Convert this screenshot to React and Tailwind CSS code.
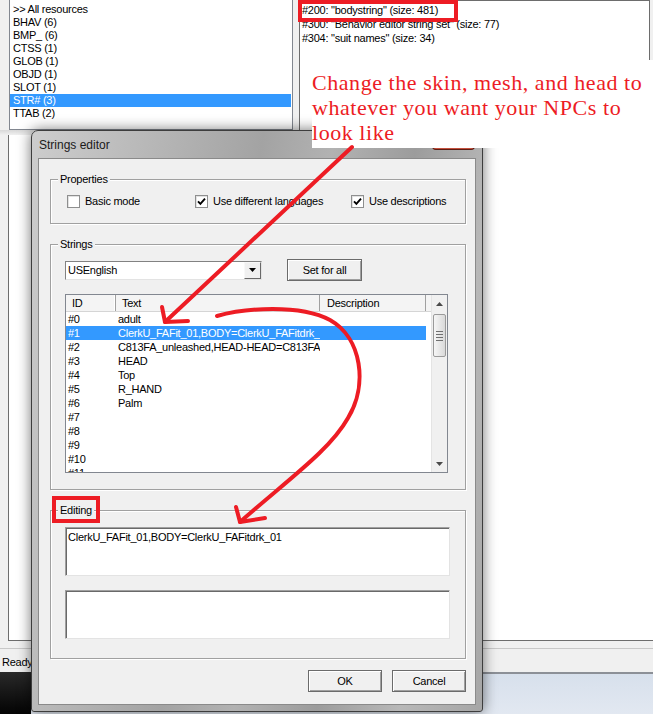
import React from 'react';

const resources = ['>> All resources', 'BHAV (6)', 'BMP_ (6)', 'CTSS (1)', 'GLOB (1)', 'OBJD (1)', 'SLOT (1)', 'STR# (3)', 'TTAB (2)'];
const strSets = ['#200: "bodystring" (size: 481)', '#300: "Behavior editor string set" (size: 77)', '#304: "suit names" (size: 34)'];
const rows = [
  ['#0', 'adult'],
  ['#1', 'ClerkU_FAFit_01,BODY=ClerkU_FAFitdrk_01'],
  ['#2', 'C813FA_unleashed,HEAD-HEAD=C813FA_unleashed'],
  ['#3', 'HEAD'],
  ['#4', 'Top'],
  ['#5', 'R_HAND'],
  ['#6', 'Palm'],
  ['#7', ''],
  ['#8', ''],
  ['#9', ''],
  ['#10', ''],
  ['#11', ''],
];

function Check({ checked, label }) {
  return (
    <div className="flex items-center gap-[5px]">
      <div className="w-[13px] h-[13px] border border-[#8e8f8f] bg-white shadow-[inset_1px_1px_0_#e2e2e2] flex items-center justify-center">
        {checked && (
          <svg width="9" height="9" viewBox="0 0 9 9">
            <path d="M1 4.3 L3.4 6.8 L8 1.6" stroke="#000" strokeWidth="1.9" fill="none" />
          </svg>
        )}
      </div>
      <span>{label}</span>
    </div>
  );
}

function Group({ label, className, children }) {
  return (
    <div className={`relative w-[416px] border border-[#a0a0a0] shadow-[inset_1px_1px_0_#fff,1px_1px_0_#fff] ${className}`}>
      <span className="absolute -top-[8px] left-[7px] px-[2px] bg-[#f0f0f0] leading-[14px]">{label}</span>
      {children}
    </div>
  );
}

function Button({ children, className = '' }) {
  return (
    <div className={`h-[22px] flex items-center justify-center bg-[#f0f0f0] border border-[#6b6b6b] shadow-[inset_1px_1px_0_#fff,inset_-1px_-1px_0_#a0a0a0] ${className}`}>
      {children}
    </div>
  );
}

export default function App() {
  return (
    <div className="relative w-[653px] h-[714px] overflow-hidden bg-[#f0f0f0] text-[11px] tracking-[-0.25px] text-black font-['Liberation_Sans',Arial,sans-serif]">
      {/* main app behind the dialog */}
      <div className="flex flex-col h-full">
        <div className="flex h-[130px]">
          <div className="w-[9px]" />
          <div className="w-[284px] bg-white border-l border-r border-b border-[#828790] pt-[3px] pr-[1px]">
            {resources.map((r, i) => (
              <div
                key={r}
                className={`h-[13px] leading-[13px] pl-[3px] whitespace-nowrap ${i === 7 ? 'bg-[#3399ff] text-white' : ''}`}
              >
                {r}
              </div>
            ))}
          </div>
          <div className="w-[6px]" />
          <div className="w-[351px] bg-white border-l border-r border-t border-[#6d6d6d] pt-[2px] pl-[2px]">
            {strSets.map(s => (
              <div key={s} className="h-[14px] leading-[14px] whitespace-nowrap">{s}</div>
            ))}
          </div>
        </div>
        <div className="h-[5px] bg-gradient-to-b from-[#d8d8d8] to-[#f0f0f0]" />
        <div className="h-[506px] ml-[8px] bg-white border-l border-b border-[#6d6d6d]" />
        <div className="h-[7px]" />
        <div className="h-[24px] border-t border-[#c8c8c8] pl-[2px] pt-[6px] leading-[14px]">Ready</div>
        <div className="flex flex-1">
          <div className="w-[31px] bg-gradient-to-b from-[#2a2a2a] to-[#050505]" />
          <div className="flex-1 border-t-2 border-[#8c9097] bg-gradient-to-b from-[#d7e0ec] to-[#e2e8f1]" />
        </div>
      </div>

      {/* Strings editor dialog */}
      <div className="absolute left-[31px] top-[130px] w-[452px] h-[582px] rounded-t-[7px] rounded-b-[3px] border border-[#3d3d3d] bg-[linear-gradient(100deg,#cdcdcd_0%,#b9b9b9_20%,#a3a3a3_42%,#b2b2b2_55%,#9c9c9c_70%,#b8b8b8_85%,#a6a6a6_100%)] shadow-[0_0_14px_rgba(0,0,0,0.55)] flex flex-col px-[6px] pb-[6px]">
        <div className="absolute top-0 right-[7px] w-[43px] h-[19px] rounded-b-[4px] bg-[#c4503e] border border-t-0 border-[#5e1c12]" />
        <div className="h-[27px] flex items-center pl-[1px] pt-[1px] text-[12px] tracking-normal text-[#1a1a1a]">Strings editor</div>
        <div className="flex-1 bg-[#f0f0f0] border border-[#8a8a8a] pl-[11px] pt-[20px]">
          <Group label="Properties" className="h-[45px] pt-[13px] pl-[16px]">
            <div className="flex items-center">
              <div className="w-[128px]"><Check label="Basic mode" /></div>
              <div className="w-[156px]"><Check checked label="Use different languages" /></div>
              <Check checked label="Use descriptions" />
            </div>
          </Group>

          <Group label="Strings" className="h-[246px] mt-[20px] pl-[14px]">
            <div className="flex items-center gap-[25px] h-[22px] mt-[14px]">
              <div className="w-[197px] h-[19px] flex bg-white border border-t-[#828282] border-l-[#828282] border-r-[#e3e3e3] border-b-[#e3e3e3]">
                <div className="flex-1 pl-[2px] leading-[17px]">USEnglish</div>
                <div className="w-[17px] h-[17px] bg-[#f0f0f0] border border-t-[#f8f8f8] border-l-[#f8f8f8] border-r-[#696969] border-b-[#696969] flex items-center justify-center">
                  <svg width="7" height="4" viewBox="0 0 7 4"><path d="M0 0 L7 0 L3.5 4Z" fill="#000" /></svg>
                </div>
              </div>
              <Button className="w-[75px]">Set for all</Button>
            </div>
            <div className="mt-[13px] w-[383px] h-[179px] flex bg-white border border-[#828790] overflow-hidden">
              <div className="w-[365px] flex flex-col">
                <div className="h-[17px] flex bg-[#f4f4f4] border-b border-[#d5d5d5] leading-[16px]">
                  <div className="w-[50px] pl-[6px] border-r border-[#a0a0a0] shadow-[inset_-1px_0_0_#fff]">ID</div>
                  <div className="w-[204px] pl-[6px] border-r border-[#a0a0a0]">Text</div>
                  <div className="w-[106px] pl-[7px] border-r border-[#a0a0a0]">Description</div>
                </div>
                {rows.map(([id, text], i) => (
                  <div
                    key={id}
                    className={`w-[360px] h-[14px] shrink-0 flex leading-[14px] ${i === 1 ? 'bg-[#3399ff] text-white' : ''}`}
                  >
                    <div className="w-[50px] pl-[2px]">{id}</div>
                    <div className="w-[204px] pl-[2px] overflow-hidden whitespace-nowrap">{text}</div>
                  </div>
                ))}
              </div>
              <div className="w-[16px] flex flex-col bg-[#f0f0f0] border-l border-[#e4e4e4]">
                <div className="h-[17px] flex items-center justify-center">
                  <svg width="7" height="4" viewBox="0 0 7 4"><path d="M0 4 L3.5 0 L7 4Z" fill="#4a4a4a" /></svg>
                </div>
                <div className="mx-[1px] mt-[2px] h-[43px] rounded-[2px] border border-[#9a9a9a] bg-gradient-to-r from-[#f6f6f6] to-[#d9d9d9] flex flex-col items-center justify-center gap-[2px]">
                  <div className="w-[7px] h-px bg-[#707070]" />
                  <div className="w-[7px] h-px bg-[#707070]" />
                  <div className="w-[7px] h-px bg-[#707070]" />
                  <div className="w-[7px] h-px bg-[#707070]" />
                </div>
                <div className="flex-1" />
                <div className="h-[17px] flex items-center justify-center">
                  <svg width="7" height="4" viewBox="0 0 7 4"><path d="M0 0 L7 0 L3.5 4Z" fill="#4a4a4a" /></svg>
                </div>
              </div>
            </div>
          </Group>

          <Group label="Editing" className="h-[149px] mt-[20px] pl-[14px] pt-[16px]">
            <div className="w-[385px] h-[49px] bg-white border border-t-[#a0a0a0] border-l-[#a0a0a0] border-r-[#e3e3e3] border-b-[#e3e3e3] shadow-[inset_1px_1px_0_#696969] pl-[2px] pt-[2px] leading-[14px]">
              ClerkU_FAFit_01,BODY=ClerkU_FAFitdrk_01
            </div>
            <div className="mt-[14px] w-[385px] h-[49px] bg-white border border-t-[#a0a0a0] border-l-[#a0a0a0] border-r-[#e3e3e3] border-b-[#e3e3e3] shadow-[inset_1px_1px_0_#696969]" />
          </Group>

          <div className="w-[416px] mt-[11px] flex justify-end gap-[10px]">
            <Button className="w-[74px]">OK</Button>
            <Button className="w-[74px]">Cancel</Button>
          </div>
        </div>
      </div>

      {/* annotation */}
      <div className="absolute left-[312px] top-[60px] w-[341px] h-[88px] bg-white pt-[10px] text-[22px] leading-[25px] tracking-[0.55px] text-[#ed1c24] font-['Liberation_Serif',serif]">
        Change the skin, mesh, and head to
        <br />
        whatever you want your NPCs to
        <br />
        look like
      </div>

      <div className="absolute left-[298px] top-0 w-[160px] h-[22px] border-4 border-[#ed1c24]" />
      <div className="absolute left-[52px] top-[496px] w-[48px] h-[27px] border-4 border-[#ed1c24]" />

      <svg className="absolute left-0 top-0 pointer-events-none" width="653" height="714" viewBox="0 0 653 714">
        <g stroke="#ed1c24" strokeWidth="4" fill="none" strokeLinecap="round" strokeLinejoin="round">
          <path d="M352 147 L165 322" />
          <path d="M162 307 L165 322 L188 321" />
          <path d="M217 316 C245 308 300 304 330 320 C362 338 368 385 348 418 C330 450 290 478 240 522" />
          <path d="M236 507 L240 522 L265 518" />
        </g>
      </svg>
    </div>
  );
}
